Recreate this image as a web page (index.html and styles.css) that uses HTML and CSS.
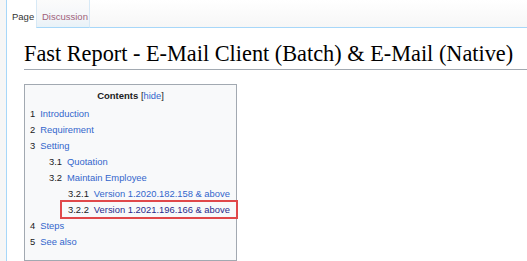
FILE: index.html
```html
<!DOCTYPE html>
<html lang="en">
<head>
  <meta charset="UTF-8">
  <title>Fast Report - E-Mail Client (Batch) &amp; E-Mail (Native)</title>
  <link rel="stylesheet" href="styles.css">
</head>
<body>
  <div class="tabs">
    <div class="tab selected">Page</div>
    <div class="tab visited">Discussion</div>
    <div class="tab-fill"></div>
  </div>

  <div class="content">
    <h1 class="first-heading">Fast Report - E-Mail Client (Batch) &amp; E-Mail (Native)</h1>

    <div class="toc">
      <div class="toc-title"><strong>Contents</strong> <span class="toc-toggle">[<a href="#">hide</a>]</span></div>
      <ul>
        <li><span class="num">1</span><a href="#">Introduction</a></li>
        <li><span class="num">2</span><a href="#">Requirement</a></li>
        <li><span class="num">3</span><a href="#">Setting</a>
          <ul>
            <li><span class="num">3.1</span><a href="#">Quotation</a></li>
            <li><span class="num">3.2</span><a href="#">Maintain Employee</a>
              <ul>
                <li><span class="num">3.2.1</span><a href="#">Version 1.2020.182.158 &amp; above</a></li>
                <li class="marked"><span class="num">3.2.2</span><a href="#" class="seen">Version 1.2021.196.166 &amp; above</a></li>
              </ul>
            </li>
          </ul>
        </li>
        <li><span class="num">4</span><a href="#">Steps</a></li>
        <li><span class="num">5</span><a href="#">See also</a></li>
      </ul>
    </div>
  </div>
</body>
</html>
```

FILE: styles.css
```css
body {
  margin: 0;
  padding-left: 6px;
  min-height: 261px;
  background: #f6f6f6;
  font-family: 'Liberation Sans', Arial, sans-serif;
  color: #202122;
  overflow: hidden;
}

a {
  color: #3366cc;
  text-decoration: none;
}

.tabs {
  display: flex;
  height: 28px;
  background: linear-gradient(to bottom, #ffffff 0%, #f6f6f6 100%);
  border-left: 1px solid #a7d7f9;
}

.tab {
  padding: 0 5px;
  font-size: 9.5px;
  line-height: 34px;
  height: 28px;
  box-sizing: border-box;
}

.tab.selected {
  width: 29px;
  background: #ffffff;
  color: #333333;
  padding-left: 5px;
}

.tab.visited {
  width: 54px;
  color: #a0627a;
  background: linear-gradient(to bottom, #fbfbfb 0%, #f4f6f9 60%, #e8f2f8 100%);
  border-left: 1px solid #d7e9f6;
  border-right: 1px solid #d7e9f6;
  border-bottom: 1px solid #a7d7f9;
}

.tab-fill {
  flex: 1;
  border-bottom: 1px solid #a7d7f9;
}

.content {
  background: #ffffff;
  border-left: 1px solid #a7d7f9;
  padding: 12px 0 0 17px;
  min-height: 233px;
  box-sizing: border-box;
}

.first-heading {
  margin: 0 0 14px 0;
  padding-bottom: 2px;
  font-family: 'Liberation Serif', 'Times New Roman', serif;
  font-size: 22.3px;
  font-weight: normal;
  line-height: 27px;
  color: #000000;
  border-bottom: 1px solid #a2a9b1;
  white-space: nowrap;
}

.toc {
  background: #f8f9fa;
  border: 1px solid #a2a9b1;
  padding: 4px 5px 10px 5px;
  font-size: 9.4px;
  width: 201px;
}

.toc-title {
  text-align: center;
  line-height: 14px;
  margin-bottom: 3px;
}

.toc-title strong {
  font-size: 9.5px;
}

.toc ul {
  list-style: none;
  margin: 0;
  padding: 0;
}

.toc ul ul {
  margin-left: 19px;
}

.toc li {
  line-height: 16px;
  white-space: nowrap;
}

.toc .num {
  margin-right: 5px;
  color: #202122;
}

.toc .marked {
  position: relative;
}

.toc .marked::after {
  content: "";
  position: absolute;
  left: -8px;
  right: -7px;
  top: -2px;
  bottom: -1px;
  border: 2px solid #e0484a;
}

.toc a.seen {
  color: #2a2a8c;
}
```
